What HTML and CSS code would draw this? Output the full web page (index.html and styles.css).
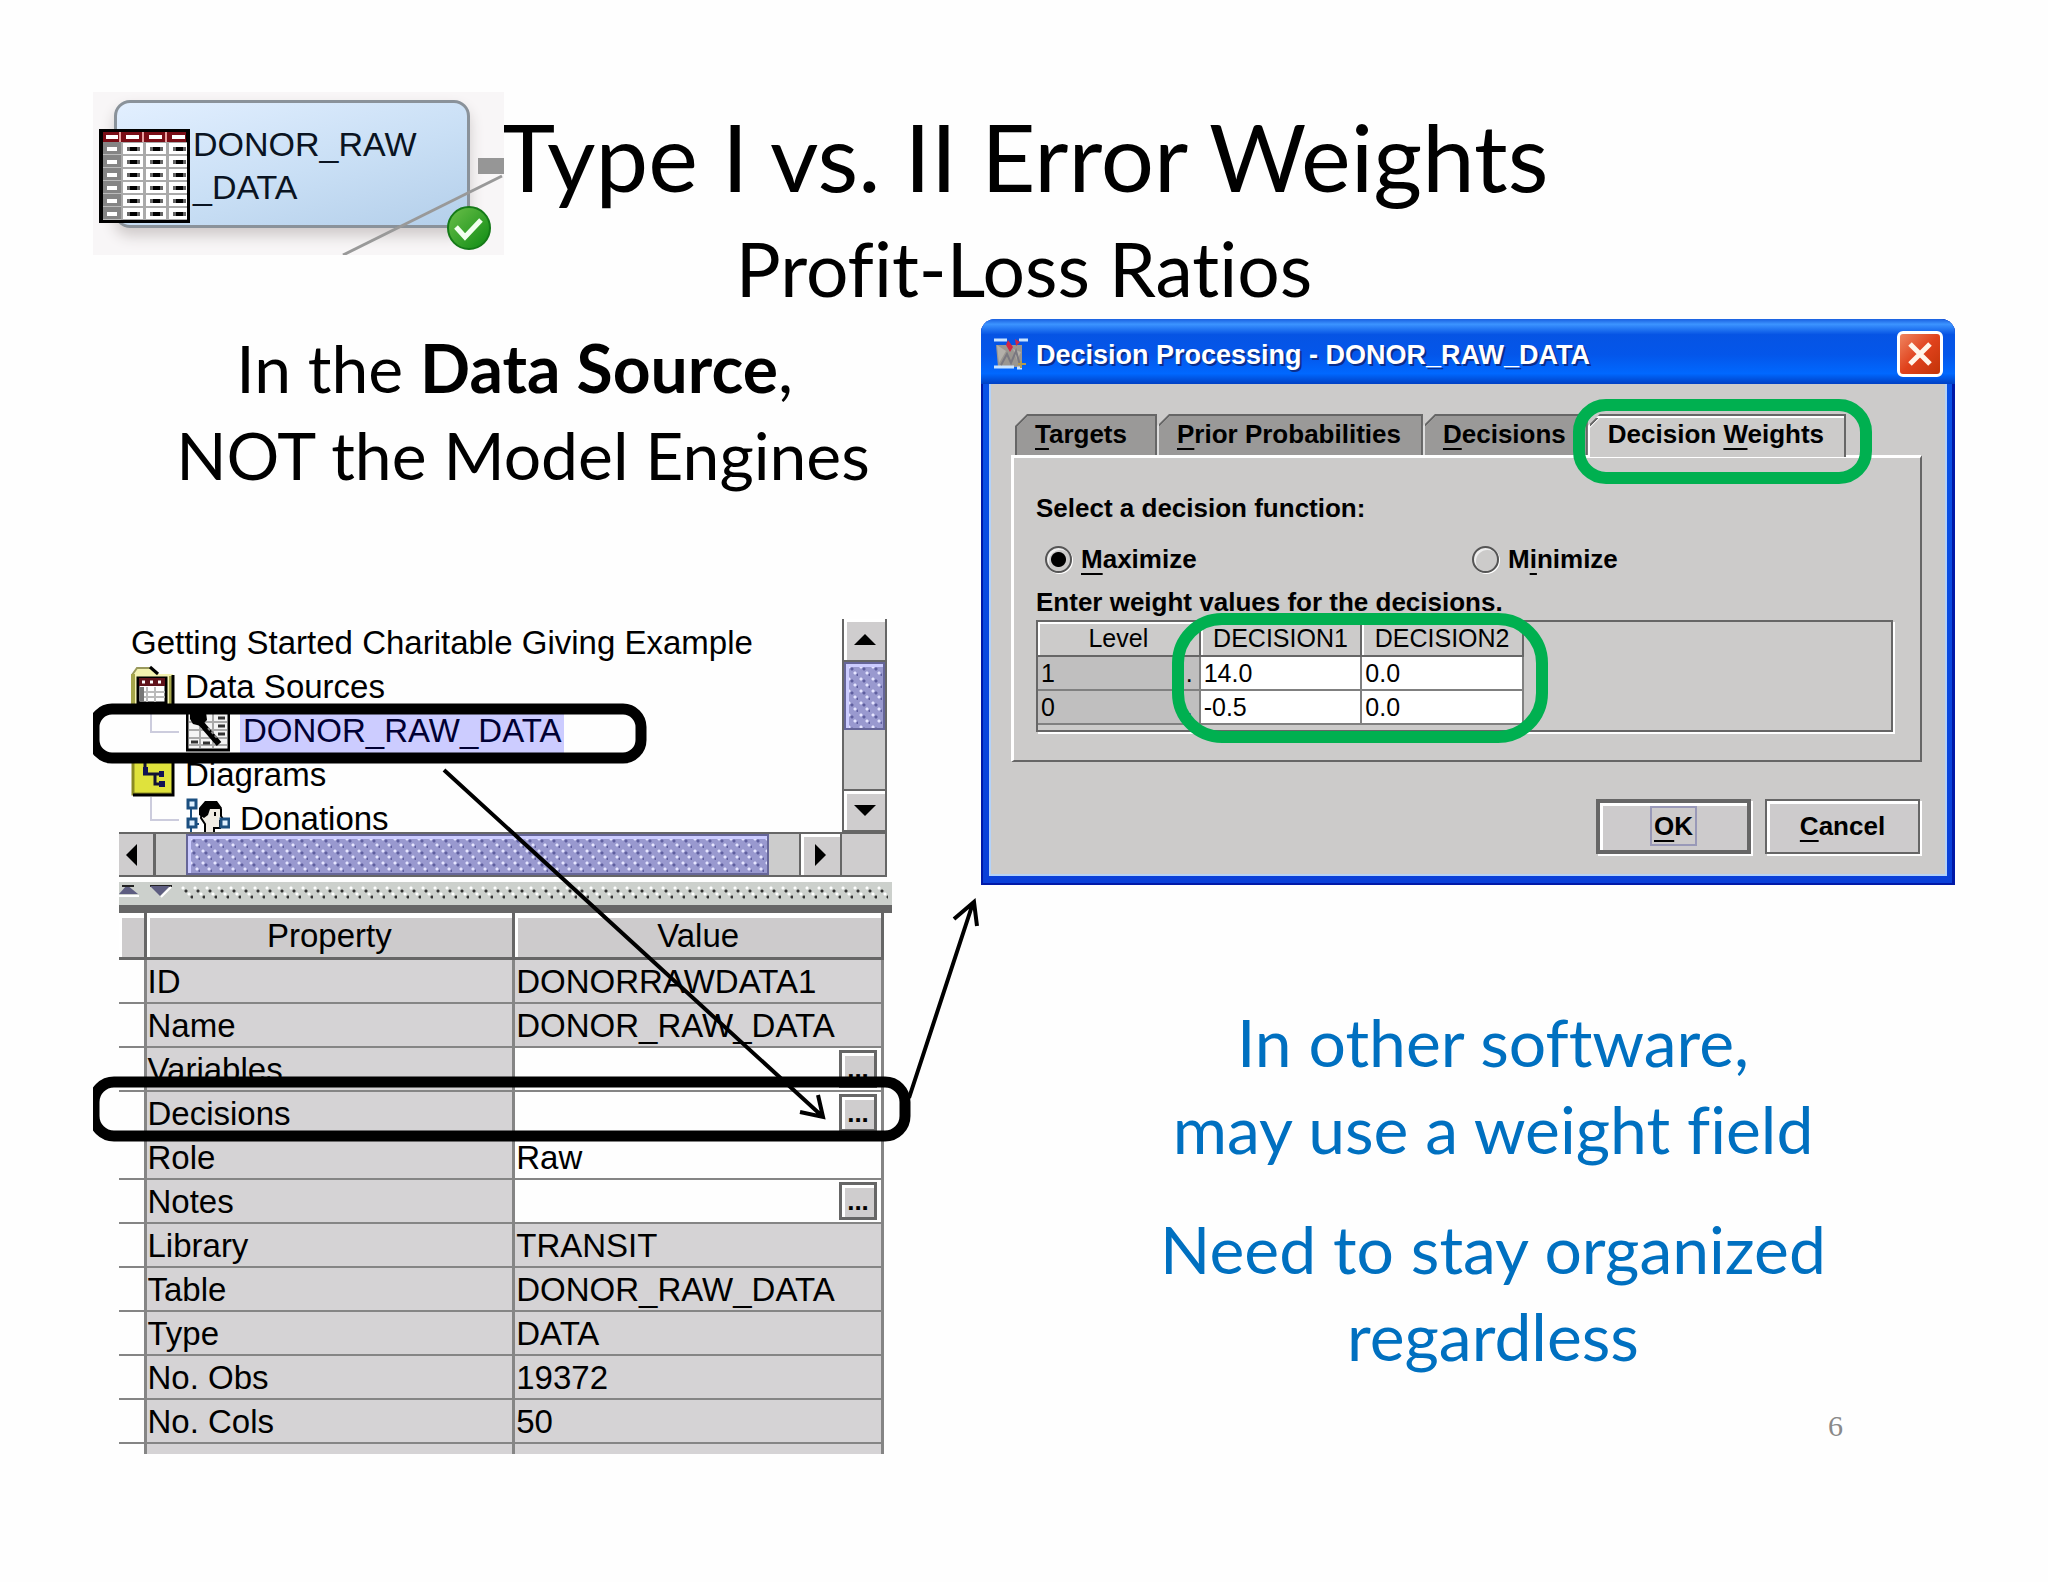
FILE: index.html
```html
<!DOCTYPE html>
<html lang="en">

<head>
    <meta charset="UTF-8">
    <meta name="viewport" content="width=device-width, initial-scale=1.0">
    <title>Type I vs. II Error Weights</title>
    <link rel="stylesheet" href="styles.css">
</head>

<body>
    <main class="slide">
        <header class="slide-header">
            <!-- Diagram node -->
            <div class="node">
                <div class="node-box">DONOR_RAW<br>_DATA</div>
                <svg class="node-art" viewBox="0 0 411 163" aria-hidden="true">
                    <defs>
                        <linearGradient id="ok" x1="0" y1="0" x2="1" y2="1">
                            <stop offset="0" stop-color="#6cc04a" />
                            <stop offset="1" stop-color="#0c8a12" />
                        </linearGradient>
                        <pattern id="cell" width="23" height="13" patternUnits="userSpaceOnUse" x="29" y="50">
                            <rect width="23" height="13" fill="#aaa" />
                            <rect x="1" y="1" width="20" height="11" fill="#fff" />
                            <rect x="5" y="5" width="13" height="4" fill="#666" />
                            <rect x="8" y="5" width="7" height="4" fill="#000" />
                        </pattern>
                        <pattern id="side" width="17" height="13" patternUnits="userSpaceOnUse" x="10" y="50">
                            <rect width="17" height="13" fill="#858585" />
                            <rect y="12" width="17" height="1" fill="#bbb" />
                            <rect x="4" y="5" width="10" height="4" fill="#fff" />
                        </pattern>
                    </defs>
                    <path d="M250 163L409 84" stroke="#999" stroke-width="3" />
                    <rect x="385" y="66" width="26" height="16" fill="#969696" />
                    <rect x="6" y="37" width="91" height="94" fill="#000" />
                    <rect x="10" y="40" width="83" height="10" fill="#7a0d16" />
                    <path d="M27 40v10M50 40v10M73 40v10" stroke="#e8a0a0" stroke-width="2" />
                    <path d="M13 45h12M33 45h13M56 45h13M79 45h13" stroke="#fff" stroke-width="4" />
                    <rect x="10" y="50" width="18" height="78" fill="url(#side)" />
                    <rect x="28" y="50" width="66" height="78" fill="url(#cell)" />
                    <circle cx="376" cy="136" r="21" fill="url(#ok)" stroke="#157a18" stroke-width="2" />
                    <path d="M363 135l9 10l16-17" fill="none" stroke="#f2fff0" stroke-width="5" />
                </svg>
            </div>
            <div class="headings">
                <h1>Type I vs. II Error Weights</h1>
                <h2>Profit-Loss Ratios</h2>
            </div>
        </header>

        <div class="columns">
            <section class="left">
                <p class="lead">In the <b>Data Source</b>,&nbsp;<br>NOT the Model Engines</p>

                <div class="explorer">
                    <!-- Project tree -->
                    <div class="tree-pane">
                        <ul class="tree">
                            <li>Getting Started Charitable Giving Example</li>
                            <li>
                                <svg class="icon" viewBox="0 0 44 44" aria-hidden="true">
                                    <path d="M1 10L6 3h14l6 6h16v34H1z" fill="#f4f2b0" />
                                    <path d="M1 10L6 3h14" fill="none" stroke="#99995c" stroke-width="2" />
                                    <path d="M19 2l8 7" stroke="#000" stroke-width="3" />
                                    <path d="M2 9v33h38V11" fill="none" stroke="#a5a54a" stroke-width="4" />
                                    <path d="M42 10v33H2" fill="none" stroke="#000" stroke-width="3" />
                                    <rect x="7" y="13" width="28" height="25" fill="#fff" stroke="#000" stroke-width="3" />
                                    <rect x="8" y="13" width="26" height="8" fill="#60131b" />
                                    <path d="M11 17h3M19 17h3M27 17h3" stroke="#fff" stroke-width="3" />
                                    <path d="M9 27h25M9 32h25M16 22v15M24 22v15" stroke="#bbb" stroke-width="2" />
                                    <path d="M11 22v15" stroke="#777" stroke-width="4" />
                                </svg>
                                <span>Data Sources</span>
                            </li>
                            <li class="child">
                                <svg class="icon" viewBox="0 0 44 44" aria-hidden="true">
                                    <rect x="1" y="3" width="42" height="38" fill="#f4f4f4" stroke="#000" stroke-width="3" />
                                    <path d="M3 13h38M3 21h38M3 29h38M3 36h38M14 5v34M27 5v34" stroke="#aaa" stroke-width="2" />
                                    <path d="M5 33h7M17 34h7M32 17h7M32 25h7M32 9h7" stroke="#333" stroke-width="3" />
                                    <path d="M4 3h16l1 8l-6 6l-8-2l-3-5z" fill="#000" />
                                    <path d="M14 13L33 35" stroke="#000" stroke-width="6" />
                                    <path d="M22 19l10 11" stroke="#888" stroke-width="2" stroke-dasharray="3 2" />
                                </svg>
                                <span class="selected">DONOR_RAW_DATA</span>
                            </li>
                            <li>
                                <svg class="icon" viewBox="0 0 44 44" aria-hidden="true">
                                    <path d="M1 4h42v38H1z" fill="#dfe23c" />
                                    <path d="M2 4v37h38" fill="none" stroke="#8b8b22" stroke-width="3" />
                                    <path d="M42 4v38H2" fill="none" stroke="#000" stroke-width="3" />
                                    <path d="M14 10v10M12 21h20M24 21v10h8" fill="none" stroke="#111133" stroke-width="3" />
                                    <path d="M12 14h5v8h-5zM28 18h5v6h-5zM28 28h6v6h-6z" fill="#111155" />
                                </svg>
                                <span>Diagrams</span>
                            </li>
                            <li class="child last">
                                <svg class="icon" viewBox="0 0 44 44" aria-hidden="true">
                                    <path d="M5 10v32M5 27h8M30 25h9" stroke="#1b4f80" stroke-width="2" />
                                    <path d="M16 12l6-6h8l5 6v7l3 5h-4v7h-6v5H19v-9l-4-6z" fill="#f0ece4" stroke="#000" stroke-width="2" />
                                    <path d="M13 18v-7l6-7h12l5 7l-3 1h-9l-2 6l-4 3z" fill="#000" />
                                    <path d="M29 15v4" stroke="#000" stroke-width="2" />
                                    <path d="M2 3h8v8H2zM2 22h8v8H2zM35 22h8v8h-8z" fill="#dff0ff" stroke="#1b4f80" stroke-width="3" />
                                </svg>
                                <span>Donations</span>
                            </li>
                        </ul>
                        <div class="vscroll">
                            <button class="scroll-button up" aria-label="Scroll up"></button>
                            <div class="thumb"></div>
                            <div class="track"></div>
                            <button class="scroll-button down" aria-label="Scroll down"></button>
                        </div>
                    </div>
                    <div class="hscroll">
                        <button class="scroll-button prev" aria-label="Scroll left"></button>
                        <div class="track"></div>
                        <div class="thumb"></div>
                        <div class="track"></div>
                        <button class="scroll-button next" aria-label="Scroll right"></button>
                        <div class="corner"></div>
                    </div>

                    <div class="splitter">
                        <svg width="56" height="22" viewBox="0 0 56 22" aria-hidden="true">
                            <path d="M0 12L8 3l11 9z" fill="#5d5d80" />
                            <path d="M3 4h12M31 4h22" stroke="#222" stroke-width="2" />
                            <path d="M31 4h20L41 14z" fill="#5d5d80" />
                            <path d="M0 14h20M42 15l10-10" stroke="#fff" stroke-width="2" />
                        </svg>
                        <div class="grip"></div>
                    </div>

                    <!-- Properties of the selected data source -->
                    <table class="properties">
                        <thead>
                            <tr><th class="gutter"></th><th>Property</th><th>Value</th></tr>
                        </thead>
                        <tbody>
                            <tr><td class="gutter"></td><td>ID</td><td>DONORRAWDATA1</td></tr>
                            <tr><td class="gutter"></td><td>Name</td><td>DONOR_RAW_DATA</td></tr>
                            <tr><td class="gutter"></td><td>Variables</td><td class="editable"><button class="more" aria-label="Edit variables">...</button></td></tr>
                            <tr><td class="gutter"></td><td>Decisions</td><td class="editable"><button class="more" aria-label="Edit decisions">...</button></td></tr>
                            <tr><td class="gutter"></td><td>Role</td><td class="editable">Raw</td></tr>
                            <tr><td class="gutter"></td><td>Notes</td><td class="editable"><button class="more" aria-label="Edit notes">...</button></td></tr>
                            <tr><td class="gutter"></td><td>Library</td><td>TRANSIT</td></tr>
                            <tr><td class="gutter"></td><td>Table</td><td>DONOR_RAW_DATA</td></tr>
                            <tr><td class="gutter"></td><td>Type</td><td>DATA</td></tr>
                            <tr><td class="gutter"></td><td>No. Obs</td><td>19372</td></tr>
                            <tr><td class="gutter"></td><td>No. Cols</td><td>50</td></tr>
                            <tr class="rest"><td class="gutter"></td><td></td><td></td></tr>
                        </tbody>
                    </table>
                </div>
            </section>

            <section class="right">
                <!-- Decision Processing dialog -->
                <div class="dialog">
                    <div class="titlebar">
                        <svg width="36" height="34" viewBox="0 0 36 34" aria-hidden="true">
                            <path d="M3 8h26v22H5z" fill="#9a9690" />
                            <path d="M1 3h13M26 3h9M1 30h20M24 31h5" stroke="#c9e4ff" stroke-width="3" />
                            <path d="M4 8l9 6l-7 12zM20 12l8 3l-4 8z" fill="#b4b0aa" />
                            <path d="M8 28l6-11l4 9l5-12l4 14" fill="none" stroke="#7a7880" stroke-width="2" />
                            <path d="M15 3l-2 5l4 7l3-5zM22 2l5 3l-4 4z" fill="#d22744" />
                            <path d="M28 24v7M25 27h8" stroke="#b09a50" stroke-width="2" />
                        </svg>
                        <span class="titlebar-text">Decision Processing - DONOR_RAW_DATA</span>
                        <button class="close" aria-label="Close">
                            <svg width="40" height="40" viewBox="0 0 40 40" aria-hidden="true">
                                <path d="M10 10l20 20M30 10L10 30" stroke="#fff6ea" stroke-width="5" />
                            </svg>
                        </button>
                    </div>
                    <div class="dialog-body">
                        <div class="tabs">
                            <button class="tab"><u>T</u>argets</button>
                            <button class="tab"><u>P</u>rior Probabilities</button>
                            <button class="tab"><u>D</u>ecisions</button>
                            <button class="tab active">Decision <u>W</u>eights</button>
                        </div>
                        <div class="tab-panel">
                            <p>Select a decision function:</p>
                            <div class="radios">
                                <label><input type="radio" name="decision" checked><span><u>M</u>aximize</span></label>
                                <label><input type="radio" name="decision"><span>M<u>i</u>nimize</span></label>
                            </div>
                            <p>Enter weight values for the decisions.</p>
                            <div class="weights-box">
                                <table class="weights">
                                    <thead>
                                        <tr><th>Level</th><th>DECISION1</th><th>DECISION2</th></tr>
                                    </thead>
                                    <tbody>
                                        <tr><th><div class="level"><span>1</span><span>.</span></div></th><td>14.0</td><td>0.0</td></tr>
                                        <tr><th><div class="level"><span>0</span><span>.</span></div></th><td>-0.5</td><td>0.0</td></tr>
                                    </tbody>
                                </table>
                            </div>
                        </div>
                        <div class="actions">
                            <button class="action default"><span><u>O</u>K</span></button>
                            <button class="action"><span><u>C</u>ancel</span></button>
                        </div>
                    </div>
                </div>

                <div class="note">
                    <p>In other software,<br>may use a weight field</p>
                    <p>Need to stay organized<br>regardless</p>
                </div>
                <div class="page-number">6</div>
            </section>
        </div>

        <!-- Rings and arrows drawn over the screens -->
        <svg class="marks" width="2048" height="1582" viewBox="0 0 2048 1582" aria-hidden="true">
            <defs>
                <clipPath id="edge"><rect x="93" y="0" width="1955" height="1582" /></clipPath>
            </defs>
            <g fill="none" clip-path="url(#edge)">
                <rect x="94" y="709" width="547" height="49" rx="18" stroke="#000" stroke-width="11" />
                <rect x="94" y="1082" width="811" height="54" rx="20" stroke="#000" stroke-width="11" />
                <rect x="1579" y="405" width="287" height="73" rx="27" stroke="#00b050" stroke-width="12" />
                <rect x="1178" y="619" width="364" height="118" rx="44" stroke="#00b050" stroke-width="12" />
                <path d="M444 770L822 1116M800 1112L823 1117L818 1095" stroke="#000" stroke-width="4" />
                <path d="M909 1098L973 903M954 919L974 902L977 926" stroke="#000" stroke-width="4" />
            </g>
        </svg>
    </main>
</body>

</html>
```

FILE: styles.css
```css
* {
    box-sizing: border-box;
}

body {
    margin: 0;
    background: #fefefe;
    color: #000;
    font-family: "Liberation Sans", Arial, sans-serif;
}

h1,
h2,
p,
ul {
    margin: 0;
    padding: 0;
}

h1,
h2 {
    font-weight: normal;
}

button {
    padding: 0;
    font: inherit;
    color: inherit;
}

u {
    text-decoration-thickness: 2px;
    text-underline-offset: 5px;
    text-decoration-skip-ink: none;
}

.slide {
    position: relative;
    padding: 92px 93px 0;
}

/* Header */
.slide-header {
    display: grid;
    grid-template-columns: 411px minmax(0, 1fr) 411px;
    padding-bottom: 3px;
}

.headings {
    display: flex;
    flex-direction: column;
    align-items: center;
    font-family: Lato, sans-serif;
    font-variant-ligatures: none;
    white-space: nowrap;
}

h1 {
    font-size: 94px;
    line-height: 128px;
}

h2 {
    font-size: 75px;
    line-height: 96px;
}

.node {
    position: relative;
    height: 163px;
    padding: 8px 34px 27px 21px;
    background: #f8f6f7;
}

.node-box {
    height: 128px;
    padding: 20px 0 0 76px;
    border: 3px solid #8a929a;
    border-radius: 16px;
    background: linear-gradient(165deg, #e2efff, #c9dff5 55%, #b4cfea);
    box-shadow: 0 8px 14px #cfcaca;
    color: #0a1422;
    font-size: 34px;
    line-height: 43px;
}

.node-art {
    position: absolute;
    inset: 0;
}

/* Two columns */
.columns {
    display: grid;
    grid-template-columns: 860fr 974fr;
    gap: 28px;
}

.lead,
.note {
    font-family: Lato, sans-serif;
    font-size: 66px;
    font-variant-ligatures: none;
    line-height: 87px;
    text-align: center;
    white-space: nowrap;
}

.lead {
    padding-top: 5px;
}

.note {
    padding: 113px 0 0 50px;
    color: #0070c0;
}

.note p + p {
    margin-top: 33px;
}

.page-number {
    padding: 30px 112px 0 0;
    color: #898989;
    font-family: "Liberation Serif", serif;
    font-size: 30px;
    line-height: 34px;
    text-align: right;
}

/* Explorer */
.explorer {
    margin: 121px 61px 0 26px;
    font-size: 33px;
}

.tree-pane {
    display: grid;
    grid-template-columns: 1fr 45px;
    height: 213px;
    margin-right: 5px;
}

.tree {
    padding: 2px 0 0 12px;
    list-style: none;
    white-space: nowrap;
}

.tree li {
    display: flex;
    gap: 10px;
    height: 44px;
    line-height: 44px;
}

.tree .child {
    position: relative;
    padding-left: 55px;
}

.child::before {
    content: "";
    position: absolute;
    left: 19px;
    top: 0;
    width: 27px;
    height: 22px;
    border-left: 2px solid #ccccdd;
    border-bottom: 2px solid #ccccdd;
}

/* The last row slides under the scrollbar */
.tree .last {
    height: 35px;
}

.icon {
    width: 44px;
    height: 44px;
    flex: none;
}

.selected {
    padding: 0 3px;
    background: #ccccff;
    color: #000033;
}

/* Scrollbars */
.vscroll {
    display: flex;
    flex-direction: column;
    border-left: 2px solid #666;
    border-right: 2px solid #666;
}

.hscroll {
    position: relative;
    display: flex;
    height: 45px;
    margin-right: 5px;
    border: 2px solid #666;
    border-left: none;
}

.scroll-button {
    display: flex;
    flex: none;
    align-items: center;
    justify-content: center;
    border: 0 solid #666;
    background: #cfcdce;
    box-shadow: inset 3px 3px #fff;
}

.scroll-button::before {
    content: "";
    border: 11px solid transparent;
}

.vscroll .scroll-button {
    height: 43px;
    border-width: 2px 0;
}

.up::before {
    border-top: 0;
    border-bottom-color: #000;
}

.down::before {
    border-bottom: 0;
    border-top-color: #000;
}

.prev::before {
    border-left: 0;
    border-right-color: #000;
}

.next::before {
    border-right: 0;
    border-left-color: #000;
}

.scroll-button.prev {
    width: 37px;
    padding-right: 10px;
    border-right-width: 3px;
    box-shadow: none;
}

.scroll-button.next {
    width: 43px;
    border-width: 0 2px;
}

.scroll-button.up {
    border-top-width: 0;
}

.thumb {
    border: 2px solid #666699;
    background-color: #9999cf;
    background-image:
        radial-gradient(circle at 3px 3px, #e4e4ff 1px, transparent 2px),
        radial-gradient(circle at 9px 9px, #e4e4ff 1px, transparent 2px),
        radial-gradient(circle at 6px 5px, #5f5f9f 1px, transparent 2px),
        radial-gradient(circle at 12px 11px, #5f5f9f 1px, transparent 2px);
    background-size: 12px 12px;
    box-shadow: inset 3px 3px #ccccff;
}

.vscroll .thumb {
    height: 68px;
}

.track {
    background: #cccccc;
}

.vscroll .track {
    flex: 1;
}

.hscroll .track {
    width: 30px;
}

.hscroll .thumb {
    flex: 1;
}

.corner {
    width: 43px;
    background: #cfcdce;
}

.splitter {
    display: flex;
    height: 31px;
    margin-top: 5px;
    border-bottom: 8px solid #666;
    background: #ccd0cc;
}

.grip {
    flex: 1;
    margin: 4px 4px 5px 6px;
    background-image:
        radial-gradient(circle at 2px 2px, #fff 1px, transparent 2px),
        radial-gradient(circle at 8px 8px, #fff 1px, transparent 2px),
        radial-gradient(circle at 5px 5px, #333 1px, transparent 2px),
        radial-gradient(circle at 11px 11px, #333 1px, transparent 2px);
    background-size: 12px 14px;
}

/* Property table */
.properties {
    width: calc(100% - 8px);
    border-collapse: collapse;
    table-layout: fixed;
    line-height: 40px;
}

.properties tr {
    height: 44px;
}

.properties th {
    padding: 0;
    border: 3px solid #666;
    border-top: 2px solid #fff;
    background: #cdcbcc;
    box-shadow: inset 3px 3px #fff;
    font-weight: normal;
}

.properties td {
    height: 44px;
    padding: 2px 0 0 1px;
    border: 2px solid #858585;
    border-right-width: 3px;
    background: #d5d3d5;
}

.properties .gutter {
    width: 26px;
    border-left: none;
}

.properties td.gutter,
.properties .editable {
    background: #fefefe;
}

.properties .rest td {
    height: 11px;
    padding: 0;
    border-bottom: none;
}

.properties .rest {
    height: 11px;
}

.more {
    display: block;
    width: 38px;
    height: 38px;
    margin: -2px 4px 0 auto;
    border: 3px solid #666;
    background: #cfcdce;
    box-shadow: inset 3px 3px #fff;
    font-weight: bold;
    font-size: 26px;
    line-height: 30px;
}

/* Dialog */
.dialog {
    padding: 0 8px 9px;
    border-radius: 14px 14px 0 0;
    background: linear-gradient(#0a55e8, #0a3fd8);
    box-shadow: inset 2px -2px #0019a8, inset -3px 0 #0019a8;
    font-size: 26px;
    font-weight: bold;
}

.titlebar {
    display: flex;
    align-items: center;
    gap: 7px;
    height: 65px;
    margin: 0 -8px;
    padding: 5px 12px 0;
    border-radius: 14px 14px 0 0;
    background: linear-gradient(#1a60e0, #3c94ff 8%, #0654e4 24%, #0456ea 55%, #0068ff 84%, #0040c4);
    color: #fff;
}

.titlebar-text {
    flex: 1;
    padding-top: 2px;
    font-size: 27px;
    text-shadow: 2px 2px #0a2e8c;
}

.close {
    display: flex;
    width: 46px;
    height: 46px;
    border: 3px solid #fff;
    border-radius: 6px;
    background: linear-gradient(135deg, #ef8560, #e0421c 50%, #c23408);
}

.dialog-body {
    padding: 30px 23px 20px 20px;
    border: 2px solid #b4d2f8;
    border-top: none;
    background: #cccbca;
}

.tabs {
    display: flex;
    padding-left: 4px;
}

.tab {
    min-width: 142px;
    height: 41px;
    margin-bottom: -2px;
    padding: 0 20px 2px 18px;
    border: 2px solid #666;
    border-bottom: none;
    background: linear-gradient(135deg, #666 10px, #9a9998 10px) border-box;
    clip-path: polygon(0 12px, 12px 0, 100% 0, 100% 100%, 0 100%);
    font-weight: bold;
    text-align: left;
}

.tab + .tab {
    border-left-color: #ddd;
}

.tab.active {
    position: relative;
    height: 43px;
    padding-bottom: 4px;
    border-left-color: #fff;
    background: linear-gradient(135deg, #666 10px, #fff 10px, #cccbca 12px) border-box;
    box-shadow: inset 0 2px #fff;
}

.tab-panel {
    height: 307px;
    padding: 32px 27px 0 22px;
    border: 2px solid #666;
    border-top: 3px solid #fff;
    border-left: 3px solid #fff;
    line-height: 36px;
}

.radios {
    display: grid;
    grid-template-columns: 427px 1fr;
    padding: 15px 0 7px 9px;
}

.radios label {
    display: flex;
    align-items: center;
    gap: 9px;
}

.radios input {
    width: 27px;
    height: 27px;
    margin: 0;
    appearance: none;
    border: 2px solid #555;
    border-radius: 50%;
    box-shadow: 1px 1px #fff, inset 2px 2px #eee;
}

.radios input:checked {
    background: radial-gradient(circle, #000 7px, transparent 8px);
}

.weights-box {
    height: 112px;
    border: 2px solid #666;
    box-shadow: 2px 2px #fff;
}

.weights {
    width: 486px;
    border-collapse: collapse;
    table-layout: fixed;
    font-size: 25px;
    font-weight: normal;
    line-height: 31px;
}

.weights th,
.weights td {
    height: 34px;
    padding: 0 0 0 3px;
    border: 2px solid #808080;
    font-weight: normal;
}

.weights td {
    background: #fff;
}

.weights thead th {
    padding: 0;
    border-top: none;
    border-color: #666;
    box-shadow: inset 2px 2px #fff;
}

.weights tbody th {
    background: #c0bfbf;
}

.weights tr > :first-child {
    border-left: none;
}

.level {
    display: flex;
    justify-content: space-between;
    padding-right: 6px;
}

.actions {
    display: flex;
    justify-content: flex-end;
    gap: 14px;
    padding: 37px 2px 0 0;
}

.action {
    width: 155px;
    height: 55px;
    border: 2px solid #666;
    background: #cdcbcc;
    box-shadow: inset 3px 3px #fff, 2px 2px #fff;
    font-weight: bold;
}

.action.default {
    border-width: 4px;
}

.default span {
    padding: 3px 2px;
    outline: 2px solid #9999b8;
}

/* Marks */
.marks {
    position: absolute;
    left: 0;
    top: 0;
    pointer-events: none;
}
```
